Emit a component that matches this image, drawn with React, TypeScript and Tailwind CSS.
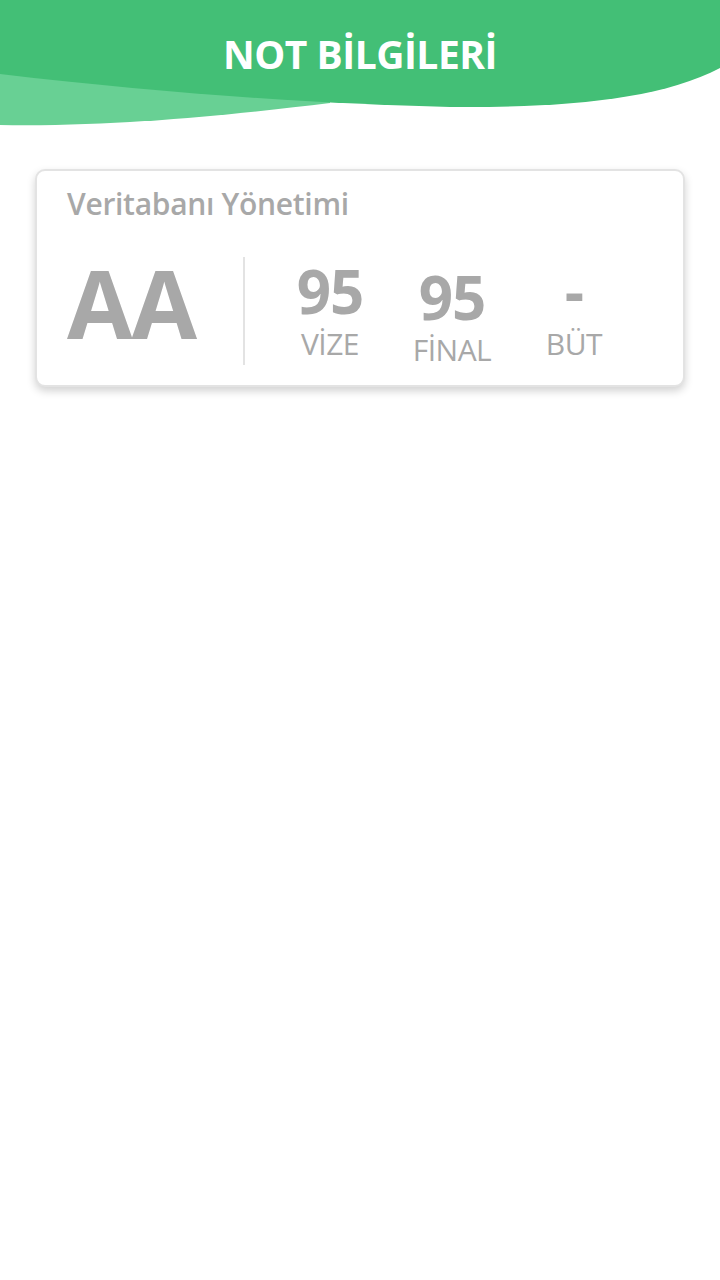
const grades = [
  { value: '95', label: 'VİZE', shift: '' },
  { value: '95', label: 'FİNAL', shift: 'mt-[6px]' },
  { value: '-', label: 'BÜT', shift: '' },
];

const Header = () => (
  <header className="relative h-[130px]">
    <svg className="absolute inset-0 w-full h-full" viewBox="0 0 720 130" preserveAspectRatio="none">
      <path d="M0 60 L0 125 C 120 127 240 114 330 103 L 330 60 Z" fill="#68d094" />
      <path d="M0 0 H720 V68 C 660 100 560 108 450 107 C 320 104 170 94 0 74 Z" fill="#43bf76" />
    </svg>
    <h1 className="relative text-center text-white font-bold text-[39px] leading-none pt-[34px] tracking-[-0.5px]">
      NOT BİLGİLERİ
    </h1>
  </header>
);

export default function App() {
  return (
    <div className="min-h-[1280px] bg-white" style={{ fontFamily: '"Open Sans", sans-serif' }}>
      <Header />
      <div className="mx-[35px] mt-[39px] h-[218px] rounded-[10px] border-2 border-[#e3e3e3] bg-white shadow-[0_4px_8px_rgba(0,0,0,0.18)] px-[30px] pt-[12px] text-[#a8a8a8]">
        <div className="text-[30px] font-semibold leading-[42px] tracking-[-0.3px]">Veritabanı Yönetimi</div>
        <div className="flex items-center mt-[30px]">
          <div className="w-[176px] text-[95px] font-bold leading-none tracking-[-1px] -mt-[18px]">AA</div>
          <div className="w-[2px] h-[108px] bg-[#e3e3e3]" />
          <div className="flex ml-[24px] mt-[4px]">
            {grades.map((g) => (
              <div key={g.label} className={`w-[122px] flex flex-col items-center ${g.shift}`}>
                <span className="text-[60px] font-bold leading-[64px] tracking-[-1px]">{g.value}</span>
                <span className="text-[30px] leading-[34px] mt-[4px] tracking-[-0.5px]">{g.label}</span>
              </div>
            ))}
          </div>
        </div>
      </div>
    </div>
  );
}
